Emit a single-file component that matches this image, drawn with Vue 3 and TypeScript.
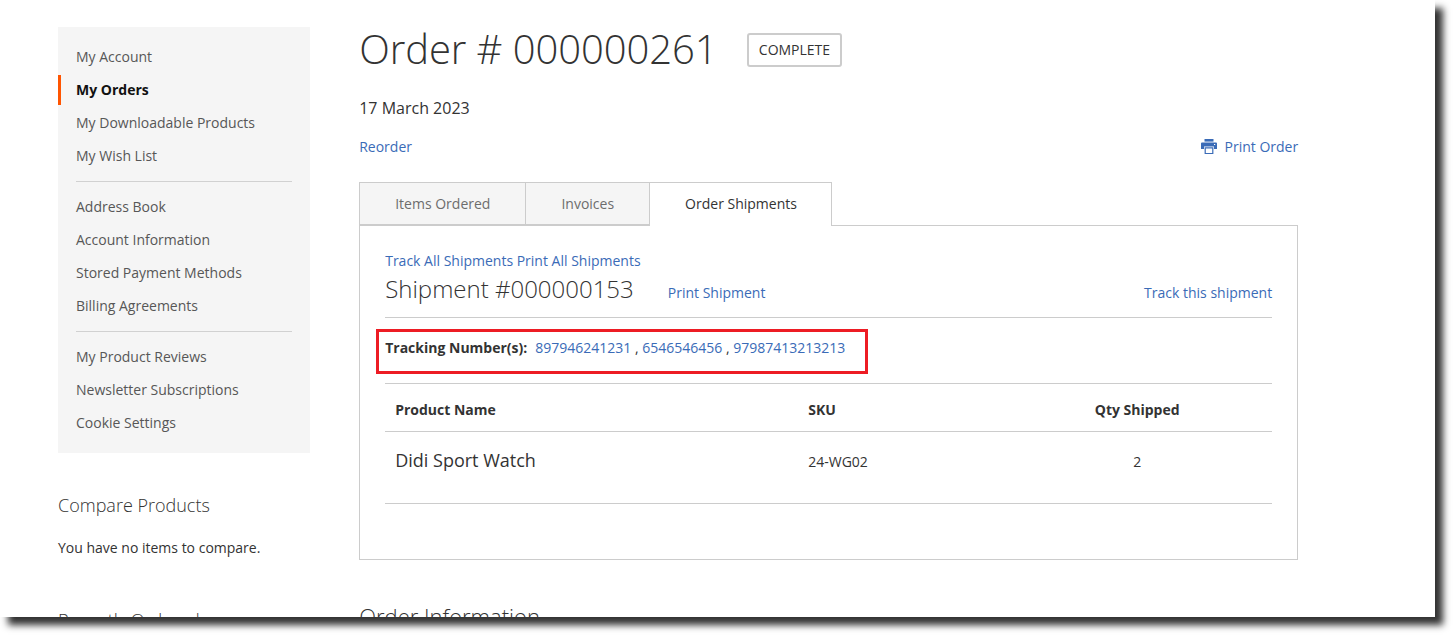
<template>
  <div class="frame">
    <div class="page">
      <!-- sidebar -->
      <aside class="sidebar">
        <nav class="account-nav">
          <template v-for="(group, i) in navGroups" :key="i">
            <div v-if="i > 0" class="nav-sep"></div>
            <div
              v-for="item in group"
              :key="item"
              class="nav-item"
              :class="{ current: item === 'My Orders' }"
            >
              {{ item }}
            </div>
          </template>
        </nav>
        <div class="side-block">
          <div class="side-title">Compare Products</div>
          <p class="side-text">You have no items to compare.</p>
        </div>
        <div class="side-title recent">Recently Ordered</div>
      </aside>

      <!-- main column -->
      <main class="main">
        <div class="title-row">
          <h1>Order # 000000261</h1>
          <span class="status">COMPLETE</span>
        </div>
        <div class="order-date">17 March 2023</div>
        <div class="actions">
          <a class="link">Reorder</a>
          <a class="link print-link">
            <svg width="16" height="15" viewBox="0 0 16 15">
              <path d="M3.5 0h9v2.6h-9z" />
              <path
                fill-rule="evenodd"
                d="M1 3.6h14a1 1 0 0 1 1 1V10h-3V7.5H3V10H0V4.6a1 1 0 0 1 1-1zM13 5v1h1.2V5z"
              />
              <path fill-rule="evenodd" d="M3.6 8.3h8.8V15H3.6zM4.8 9.4v4.5h6.4V9.4z" />
            </svg>
            <span>Print Order</span>
          </a>
        </div>

        <div class="tabs">
          <div v-for="tab in tabs" :key="tab" class="tab" :class="{ active: tab === 'Order Shipments' }">
            {{ tab }}
          </div>
        </div>
        <section class="panel">
          <div class="all-links">
            <a class="link">Track All Shipments</a>
            <a class="link">Print All Shipments</a>
          </div>
          <div class="shipment-head">
            <h2>Shipment #000000153</h2>
            <a class="link">Print Shipment</a>
            <a class="link track-one">Track this shipment</a>
          </div>
          <div class="tracking">
            <strong>Tracking Number(s):</strong>
            <span class="numbers">
              <a class="link">897946241231</a> ,
              <a class="link">6546546456</a> ,
              <a class="link">97987413213213</a>
            </span>
            <!-- annotation drawn over the screenshot -->
            <div class="highlight"></div>
          </div>
          <div class="items">
            <div class="items-row items-header">
              <span>Product Name</span>
              <span>SKU</span>
              <span class="center">Qty Shipped</span>
            </div>
            <div class="items-row items-body">
              <span class="product-name">Didi Sport Watch</span>
              <span>24-WG02</span>
              <span class="center">2</span>
            </div>
          </div>
        </section>
        <div class="section-title">Order Information</div>
      </main>
    </div>
  </div>
</template>

<script setup lang="ts">
const navGroups: string[][] = [
  ["My Account", "My Orders", "My Downloadable Products", "My Wish List"],
  ["Address Book", "Account Information", "Stored Payment Methods", "Billing Agreements"],
  ["My Product Reviews", "Newsletter Subscriptions", "Cookie Settings"],
];

const tabs: string[] = ["Items Ordered", "Invoices", "Order Shipments"];
</script>

<style>
html {
  overflow: hidden;
}

body {
  margin: 0;
  min-height: 635px;
  background: #fff;
}
</style>

<style scoped>
.frame {
  width: 1435px;
  height: 617px;
  background: #fff;
  overflow: hidden;
  box-shadow: 8px 8px 7px #333;
  font-family: "Open Sans", sans-serif;
  font-size: 14px;
  color: #333;
}

.page {
  display: flex;
  align-items: flex-start;
  padding: 27px 0 0 58px;
}

.sidebar {
  width: 252px;
  flex-shrink: 0;
}

.account-nav {
  background: #f5f5f5;
  padding: 15px 0 12px;
}

.nav-item {
  height: 30px;
  line-height: 30px;
  margin-bottom: 3px;
  padding-left: 18px;
  color: #575757;
}

.nav-item.current {
  font-weight: 700;
  color: #111;
  border-left: 3px solid #ff5501;
  padding-left: 15px;
}

.nav-sep {
  height: 1px;
  margin: 10px 18px 10px;
  background: #d1d1d1;
}

.side-block {
  margin-top: 40px;
}

.side-title {
  font-size: 18px;
  font-weight: 300;
  line-height: 24px;
}

.side-text {
  margin: 21px 0 0;
  line-height: 20px;
}

.recent {
  margin-top: 50px;
}

.main {
  width: 939px;
  margin-left: 49.2px;
  flex-shrink: 0;
}

.title-row {
  display: flex;
  align-items: center;
  gap: 29.6px;
  height: 44px;
}

h1 {
  margin: 0;
  font-size: 40px;
  font-weight: 300;
  line-height: 44px;
  letter-spacing: -0.08px;
  white-space: nowrap;
}

.status {
  height: 30px;
  line-height: 30px;
  margin-top: 1px;
  padding: 0 9.8px;
  border: 2px solid #ccc;
  border-radius: 3px;
}

.order-date {
  margin-top: 26px;
  font-size: 16px;
  line-height: 22px;
}

.link {
  color: #3a6bb7;
}

.actions {
  display: flex;
  justify-content: space-between;
  align-items: center;
  margin-top: 16px;
  height: 22px;
}

.print-link {
  display: flex;
  align-items: center;
  gap: 8px;
}

.print-link svg {
  fill: #3a6bb7;
}

.tabs {
  display: flex;
  margin-top: 25px;
  position: relative;
  z-index: 1;
}

.tab {
  height: 43px;
  line-height: 42px;
  padding: 0 35px;
  background: #f5f5f5;
  border: 1px solid #ccc;
  border-left-width: 0;
  box-sizing: border-box;
  color: #6d6d6d;
}

.tab:first-child {
  border-left-width: 1px;
}

.tab.active {
  height: 44px;
  padding-right: 34.4px;
  background: #fff;
  border-bottom: none;
  color: #333;
}

.panel {
  height: 335px;
  box-sizing: border-box;
  border: 1px solid #ccc;
  margin-top: -1px;
  padding: 25px 25px 0;
}

.all-links {
  display: flex;
  gap: 3.6px;
  line-height: 20px;
}

.shipment-head {
  display: flex;
  align-items: flex-end;
  height: 47px;
  padding-bottom: 13px;
  box-sizing: border-box;
  border-bottom: 1px solid #ccc;
}

h2 {
  margin: 0 34px 0 0;
  font-size: 24px;
  font-weight: 300;
  line-height: 30px;
  white-space: nowrap;
}

.shipment-head .link {
  line-height: 22px;
}

.track-one {
  margin-left: auto;
}

.tracking {
  position: relative;
  display: flex;
  align-items: center;
  gap: 8px;
  height: 66px;
  padding-bottom: 6px;
  box-sizing: border-box;
  border-bottom: 1px solid #ccc;
}

.highlight {
  position: absolute;
  left: -9px;
  top: 11px;
  width: 491.4px;
  height: 45px;
  box-sizing: border-box;
  border: 3px solid #ed1c24;
}

.items-row {
  display: grid;
  grid-template-columns: 413px 204px 270px;
  align-items: center;
}

.items-row > span {
  padding: 0 10px;
}

.items-header {
  height: 48px;
  padding-top: 4px;
  font-weight: 700;
  border-bottom: 1px solid #ccc;
  box-sizing: border-box;
}

.items-body {
  height: 72px;
  border-bottom: 1px solid #ccc;
  box-sizing: border-box;
  padding-bottom: 12px;
}

.product-name {
  font-size: 18px;
  margin-bottom: 4px;
}

.center {
  text-align: center;
}

.section-title {
  margin-top: 42px;
  font-size: 22px;
  font-weight: 300;
  line-height: 28px;
}
</style>
